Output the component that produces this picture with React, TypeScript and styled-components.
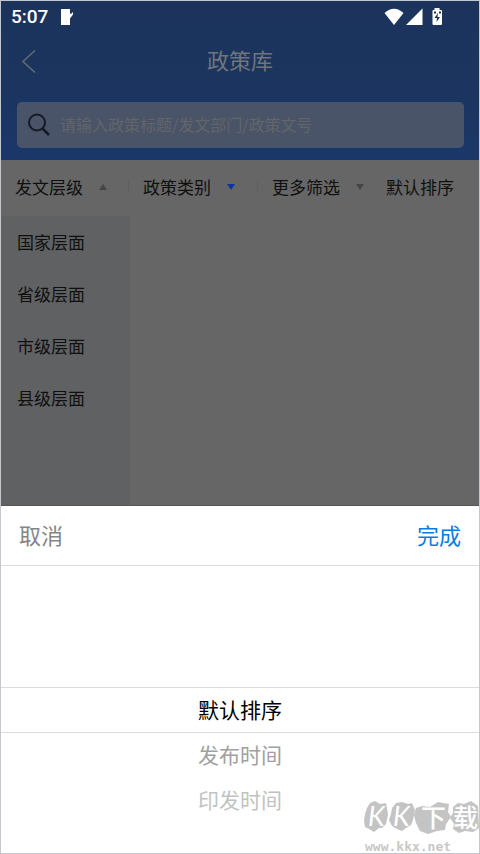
import React, { useState } from "react";
import styled, { createGlobalStyle } from "styled-components";

const GlobalStyle = createGlobalStyle`
  *, *::before, *::after { box-sizing: border-box; }
  body { margin: 0; background: #fff; }
  button, input { font: inherit; margin: 0; }
  button { border: 0; padding: 0; background: none; color: inherit; cursor: pointer; }
  svg { display: block; flex: none; }
`;

const Screen = styled.div`
  min-height: 100vh;
  display: flex;
  flex-direction: column;
  border: 1px solid #c3c8cf;
  background: #666;
  color: #101010;
  font-family: "Noto Sans CJK SC", sans-serif;
  font-size: 17px;
  line-height: 24px;
`;

const Header = styled.header`
  background: linear-gradient(#1c345c, #1b3560 60%, #1b376a);
  padding-bottom: 12px;
`;

const StatusBar = styled.div`
  height: 32px;
  display: flex;
  align-items: center;
  padding: 0 35px 0 10px;
  color: #fff;
  font-family: Roboto, sans-serif;
  font-weight: 500;
  font-size: 19px;
`;

const StatusIcons = styled.div`
  margin-left: auto;
  display: flex;
  align-items: center;
`;

const Notice = styled.svg`
  margin-left: 12px;
`;

const TitleBar = styled.div`
  height: 56px;
  display: grid;
  grid-template-columns: 56px 1fr 56px;
  align-items: center;
`;

const BackButton = styled.button`
  display: flex;
  justify-content: center;
`;

const Title = styled.h1`
  margin: 0;
  padding-bottom: 4px;
  text-align: center;
  font-size: 22px;
  line-height: 32px;
  font-weight: 400;
  color: #70757d;
`;

const SearchBox = styled.label`
  height: 46px;
  margin: 13px 15px 0 16px;
  padding: 0 10px;
  display: flex;
  align-items: center;
  gap: 9px;
  border-radius: 5px;
  background: #495469;
`;

const SearchInput = styled.input`
  flex: 1;
  min-width: 0;
  padding: 0 0 2px;
  border: 0;
  outline: 0;
  background: none;
  color: #101010;
  font-size: 16px;
  &::placeholder { color: #636568; opacity: 1; }
`;

const Filters = styled.nav`
  height: 56px;
  display: grid;
  grid-template-columns: 128fr 129fr 114fr 107fr;
  align-items: center;
  padding-bottom: 2px;
`;

const Filter = styled.button<{ $divided?: boolean }>`
  position: relative;
  display: flex;
  align-items: center;
  gap: 15px;
  padding-left: 14px;
  white-space: nowrap;
  &::after {
    content: "";
    position: absolute;
    right: 0;
    width: 1px;
    height: 14px;
    background: ${(p) => (p.$divided ? "#606060" : "transparent")};
  }
`;

const Arrow = styled.svg<{ $active?: boolean }>`
  fill: ${(p) => (p.$active ? "#0a35a0" : "#454545")};
`;

const Body = styled.main`
  flex: 1;
  display: flex;
`;

const Levels = styled.aside`
  width: 27%;
  background: #5f6163;
`;

const Level = styled.button`
  display: block;
  width: 100%;
  height: 52px;
  padding-left: 16px;
  text-align: left;
`;

const Sheet = styled.section`
  position: relative;
  background: #fff;
  border-top: 1px solid #555;
`;

const SheetBar = styled.div`
  height: 60px;
  display: flex;
  align-items: center;
  justify-content: space-between;
  padding: 0 18px 4px;
  border-bottom: 1px solid #dcdcdc;
`;

const Action = styled.button<{ $primary?: boolean }>`
  font-size: 22px;
  line-height: 32px;
  color: ${(p) => (p.$primary ? "#087be4" : "#858585")};
`;

const Wheel = styled.div`
  padding: 121px 0 30px;
`;

const Option = styled.button<{ $distance: number }>`
  display: block;
  width: 100%;
  height: ${(p) => (p.$distance === 0 ? 46 : 45)}px;
  padding-bottom: 3px;
  border: solid #dcdcdc;
  border-width: ${(p) => (p.$distance === 0 ? "1px 0" : "0")};
  font-size: 21px;
  line-height: 32px;
  color: ${(p) => ["#000", "#a0a0a0", "#c2c2c2"][p.$distance]};
`;

const Watermark = styled.div`
  position: absolute;
  right: 0;
  bottom: 0;
  pointer-events: none;
`;

const filters = [
  { label: "发文层级", arrow: "up", divided: true },
  { label: "政策类别", arrow: "down", divided: true, active: true },
  { label: "更多筛选", arrow: "down" },
];
const levels = ["国家层面", "省级层面", "市级层面", "县级层面"];
const options = ["默认排序", "发布时间", "印发时间"];

export default function App() {
  const [query, setQuery] = useState("");
  return (
    <>
      <GlobalStyle />
      <Screen>
        <Header>
          <StatusBar>
            <span>5:07</span>
            <Notice width="14" height="18" viewBox="0 0 14 18" fill="#fff" aria-hidden="true">
              <path d="M1 1h9v4.500l1 .5 2-2v2.500l-3 4V17H1z" />
            </Notice>
            <StatusIcons>
              <svg width="60" height="20" viewBox="0 0 60 20" fill="#fff" aria-hidden="true">
                <path d="M0.500 6Q10-2.500 19.500 6L10 18z" />
                <path d="M38.500 1.500V18H22z" />
                <path d="M50.500 1h5v2H57q1 0 1 1v13q0 1-1 1h-7.500q-1 0-1-1V4q0-1 1-1h1z" />
                <path d="M54 6l-3.500 5h2.500l-.5 4 3.500-5H53.500z" fill="#1c345c" />
                <path d="M50 4.500h2v2h-2zm5 0h2v2h-2z" fill="#1c345c" />
              </svg>
            </StatusIcons>
          </StatusBar>
          <TitleBar>
            <BackButton aria-label="返回">
              <svg width="16" height="24" viewBox="0 0 16 24" fill="none" stroke="#666b73" strokeWidth="1.500">
                <path d="M14 1.500L2 12.500l12 11" />
              </svg>
            </BackButton>
            <Title>政策库</Title>
          </TitleBar>
          <SearchBox>
            <svg width="24" height="24" viewBox="0 0 24 24" fill="none" stroke="#141a26" strokeWidth="2" aria-hidden="true">
              <circle cx="10" cy="9.500" r="8" />
              <path d="M15.500 15.500l6.500 6.500" strokeWidth="2.500" />
            </svg>
            <SearchInput
              aria-label="搜索政策"
              placeholder="请输入政策标题/发文部门/政策文号"
              value={query}
              onChange={(e) => setQuery(e.target.value)}
            />
          </SearchBox>
        </Header>
        <Filters>
          {filters.map((f) => (
            <Filter key={f.label} $divided={f.divided}>
              {f.label}
              <Arrow $active={f.active} width="10" height="8" viewBox="0 0 10 8" aria-hidden="true">
                <path d={f.arrow === "up" ? "M5 1l4 6H1z" : "M1 1h8L5 7z"} />
              </Arrow>
            </Filter>
          ))}
          <Filter>默认排序</Filter>
        </Filters>
        <Body>
          <Levels>
            {levels.map((l) => (
              <Level key={l}>{l}</Level>
            ))}
          </Levels>
        </Body>
        <Sheet>
          <SheetBar>
            <Action>取消</Action>
            <Action $primary>完成</Action>
          </SheetBar>
          <Wheel>
            {options.map((o, i) => (
              <Option key={o} $distance={i}>
                {o}
              </Option>
            ))}
          </Wheel>
          <Watermark>
            <svg width="118" height="64" viewBox="0 -10 118 64" role="img" aria-label="KK下载 www.kkx.net">
              <g fill="#c4c4c4">
                <path d="M6 9l3-5 5-2 5 3 6-1 1 5 1 7-2 9-4 4-3 0-5 4-5-3-4-2-1-6 1-7z" />
                <path d="M31 9l4-5 6-1 6 2 4-1 3 7-2 10-2 5-5 3-4 3-5-2-5-3-3-6 2-6z" />
                <path d="M55 9l6-2 8 1 8-5 11 2-1 8 3 5-5 7-1 6-8 1-9 3-8-3-4-8-2-8z" />
                <path d="M92 8l5-4 6 1 7-3 7 5 1 22-6 4-8-1-6 2-6-4 1-5-4-6 3-5z" />
              </g>
              <g fill="#fff" fontFamily="Lato, sans-serif" fontStyle="italic">
                <text x="7" y="27" fontSize="27">K</text>
                <text x="32" y="27" fontSize="27">K</text>
              </g>
              <g fill="#fff" fontFamily="Noto Sans CJK SC, sans-serif" fontWeight="500" fontSize="25">
                <text x="60" y="28">下</text>
                <text x="92" y="28">载</text>
              </g>
              <text x="4" y="52" fontSize="13" fontWeight="700" fill="#c8c8c8" fontFamily="DejaVu Sans Mono, monospace">
                www.kkx.net
              </text>
            </svg>
          </Watermark>
        </Sheet>
      </Screen>
    </>
  );
}
